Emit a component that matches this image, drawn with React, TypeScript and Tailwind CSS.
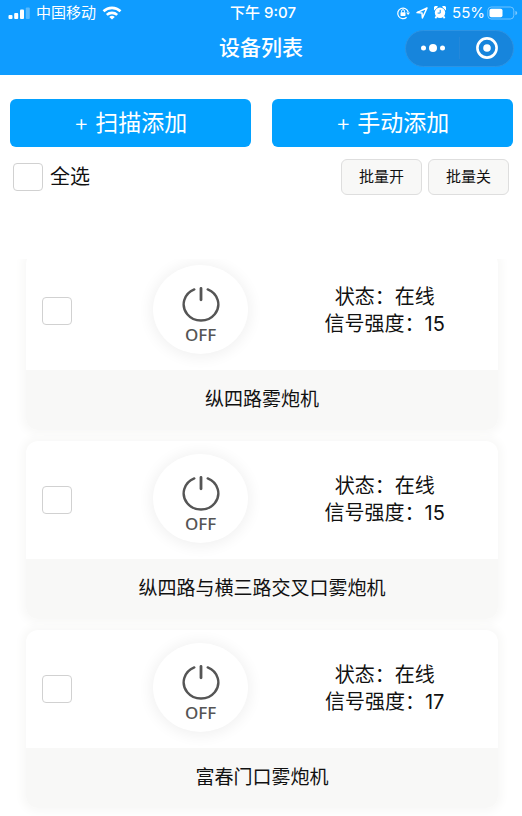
import { useState } from 'react';

type Device = { id: number; name: string; status: string; signal: number };

const devices: Device[] = [
    { id: 1, name: '纵四路雾炮机', status: '在线', signal: 15 },
    { id: 2, name: '纵四路与横三路交叉口雾炮机', status: '在线', signal: 15 },
    { id: 3, name: '富春门口雾炮机', status: '在线', signal: 17 },
];

export default function App() {
    const [selected, setSelected] = useState<number[]>([]);
    const allSelected = selected.length === devices.length;

    const toggle = (id: number) =>
        setSelected((prev) => (prev.includes(id) ? prev.filter((x) => x !== id) : [...prev, id]));

    return (
        <div className="h-screen flex flex-col bg-white text-[#111] font-['Inter','Noto_Sans_CJK_SC',sans-serif]">
            <header className="bg-[#0f9cff] text-white pb-2">
                <StatusBar />
                <TitleBar />
            </header>

            {/* Toolbar */}
            <div className="pt-6 px-[9px]">
                <div className="flex gap-[21px] pl-px">
                    <AddButton label="扫描添加" />
                    <AddButton label="手动添加" />
                </div>
                <div className="flex items-center justify-between mt-3 pl-1 pr-1">
                    <label className="flex items-center gap-[7px] text-xl leading-7">
                        <Checkbox
                            checked={allSelected}
                            onChange={() => setSelected(allSelected ? [] : devices.map((d) => d.id))}
                        />
                        全选
                    </label>
                    <div className="flex gap-[6px]">
                        <BatchButton label="批量开" />
                        <BatchButton label="批量关" />
                    </div>
                </div>
            </div>

            {/* Device list, scrolls under the toolbar */}
            <main className="flex-1 min-h-0 mt-16 px-3 overflow-y-auto">
                <ul className="flex flex-col gap-[11px] -mt-[7px] pl-[14px] pr-3">
                    {devices.map((d) => (
                        <DeviceCard
                            key={d.id}
                            device={d}
                            checked={selected.includes(d.id)}
                            onToggle={() => toggle(d.id)}
                        />
                    ))}
                </ul>
            </main>
        </div>
    );
}

function StatusBar() {
    return (
        <div className="grid grid-cols-[1fr_auto_1fr] items-center h-[25px] pl-2 pr-1 text-[15px] leading-6">
            <div className="flex items-center gap-[6px]">
                <svg width="22" height="12" viewBox="0 0 22 12" fill="currentColor">
                    <rect x="0.5" y="8" width="4" height="4" rx="1" />
                    <rect x="6.2" y="6" width="4" height="6" rx="1" />
                    <rect x="12" y="2.5" width="4" height="9.5" rx="1" />
                    <rect x="17.8" y="0.4" width="4" height="11.6" rx="1" opacity="0.3" />
                </svg>
                <span>中国移动</span>
                <svg width="20" height="14" viewBox="0 0 20 14" fill="none" stroke="currentColor" strokeWidth="2.6">
                    <path d="M1.5 5.3a12.2 12.2 0 0 1 17 0" />
                    <path d="M4.8 8.9a7.6 7.6 0 0 1 10.4 0" />
                    <path d="M10 13.6 7.2 11a4 4 0 0 1 5.6 0Z" fill="currentColor" stroke="none" />
                </svg>
            </div>
            <span className="font-medium">下午 9:07</span>
            <div className="flex items-center justify-end gap-[6px]">
                {/* Rotation lock */}
                <svg width="14" height="14" viewBox="0 0 14 14" fill="none" stroke="currentColor">
                    <path d="M10.6 11.3A5.3 5.3 0 1 1 12.2 6.2" strokeWidth="1.2" />
                    <path d="M10.2 6.4h3.8l-1.9 2.6Z" fill="currentColor" stroke="none" />
                    <rect x="4.5" y="6.2" width="5" height="3.7" rx="0.6" fill="currentColor" stroke="none" />
                    <path d="M5.5 6.4V5.2a1.5 1.5 0 0 1 3 0v1.2" strokeWidth="1" />
                </svg>
                <svg width="12" height="12" viewBox="0 0 12 12" fill="none" stroke="currentColor" strokeWidth="1.5" strokeLinejoin="round">
                    <path d="M11 1 1 5.6l5 .4.4 5Z" />
                </svg>
                {/* Alarm */}
                <svg width="12" height="13" viewBox="0 0 12 13" fill="currentColor">
                    <circle cx="6" cy="6.8" r="5.2" />
                    <path d="M.1 4.4A2.6 2.6 0 0 1 4 .8Z" />
                    <path d="M11.9 4.4A2.6 2.6 0 0 0 8 .8Z" />
                    <path d="m2.6 10.2-1.2 2M9.4 10.2l1.2 2" stroke="currentColor" strokeWidth="1.7" />
                    <path d="M6.2 3.8v3.3H3.6" fill="none" stroke="#0f9cff" strokeWidth="1" />
                </svg>
                <div className="flex items-center gap-[2px]">
                    <span>55%</span>
                    <svg width="31" height="14" viewBox="0 0 31 14" fill="none">
                        <rect x="0.8" y="1" width="26" height="12" rx="3.5" stroke="#fff" strokeOpacity="0.4" />
                        <rect x="2.5" y="2.8" width="13" height="8.4" rx="1.8" fill="#fff" />
                        <path d="M28.4 5v4c1.2-.4 1.8-1.1 1.8-2s-.6-1.6-1.8-2Z" fill="#fff" fillOpacity="0.45" />
                    </svg>
                </div>
            </div>
        </div>
    );
}

function TitleBar() {
    return (
        <div className="grid grid-cols-[1fr_auto_1fr] items-center h-[42px] px-2 pt-1">
            <h1 className="col-start-2 text-[21px] leading-8 font-medium">设备列表</h1>
            <div className="justify-self-end flex items-center w-[109px] h-[37px] rounded-full bg-[#1785dc] border border-[#2c93e3]">
                <button type="button" aria-label="更多" className="flex-1 h-full flex items-center justify-center">
                    <svg width="24" height="8" viewBox="0 0 24 8" fill="currentColor">
                        <circle cx="2.5" cy="4" r="2.5" />
                        <circle cx="12" cy="4" r="4" />
                        <circle cx="21.5" cy="4" r="2.5" />
                    </svg>
                </button>
                <span className="w-px h-[22px] bg-[#2488da]" />
                <button type="button" aria-label="关闭" className="flex-1 h-full flex items-center justify-center">
                    <svg width="22" height="22" viewBox="0 0 22 22" fill="none">
                        <circle cx="11" cy="11" r="9.6" stroke="currentColor" strokeWidth="2.6" />
                        <circle cx="11" cy="11" r="3.8" fill="currentColor" />
                    </svg>
                </button>
            </div>
        </div>
    );
}

function AddButton({ label }: { label: string }) {
    return (
        <button type="button" className="flex-1 h-12 rounded-md bg-[#02a1ff] text-white text-[23px] leading-8">
            <span className="font-light">+</span> {label}
        </button>
    );
}

function BatchButton({ label }: { label: string }) {
    return (
        <button type="button" className="w-[81px] h-9 rounded-md border border-[#dedede] bg-[#f8f8f7] text-[15px]">
            {label}
        </button>
    );
}

function Checkbox({ checked, onChange, label }: { checked: boolean; onChange: () => void; label?: string }) {
    return (
        <input
            type="checkbox"
            aria-label={label}
            checked={checked}
            onChange={onChange}
            className="appearance-none w-[30px] h-7 shrink-0 rounded border border-[#d1d1d1] bg-white checked:bg-[#02a1ff]"
        />
    );
}

function DeviceCard({ device, checked, onToggle }: { device: Device; checked: boolean; onToggle: () => void }) {
    return (
        <li className="rounded-xl bg-white shadow-[0_0_10px_4px_#f8f8f7]">
            <div className="flex items-center h-[118px]">
                <div className="w-[22%] pl-4 flex">
                    <Checkbox checked={checked} onChange={onToggle} label={device.name} />
                </div>
                <div className="w-[30%] pb-[3px] flex justify-center">
                    <PowerButton />
                </div>
                <div className="flex-1 text-center text-xl leading-[27px]">
                    <p>状态：{device.status}</p>
                    <p>信号强度：{device.signal}</p>
                </div>
            </div>
            <div className="h-[60px] flex items-center justify-center rounded-b-xl bg-[#f8f8f7] text-[19px]">
                {device.name}
            </div>
        </li>
    );
}

function PowerButton() {
    return (
        <button
            type="button"
            className="w-[95px] h-[89px] rounded-[50%] bg-white shadow-[0_1px_14px_3px_#f2f2f2] flex flex-col items-center justify-center pt-3 text-[#555]"
        >
            <svg width="38" height="36" viewBox="0 0 38 36" fill="none" stroke="currentColor" strokeWidth="2.4" strokeLinecap="round">
                <path d="M12.3 3.4A17.3 16.2 0 1 0 25.7 3.4" />
                <path d="M19 2.4v11.4" strokeWidth="2.8" />
            </svg>
            <span className="mt-[3px] text-[17px] leading-5 font-medium font-['Noto_Sans','Open_Sans',sans-serif]">OFF</span>
        </button>
    );
}
